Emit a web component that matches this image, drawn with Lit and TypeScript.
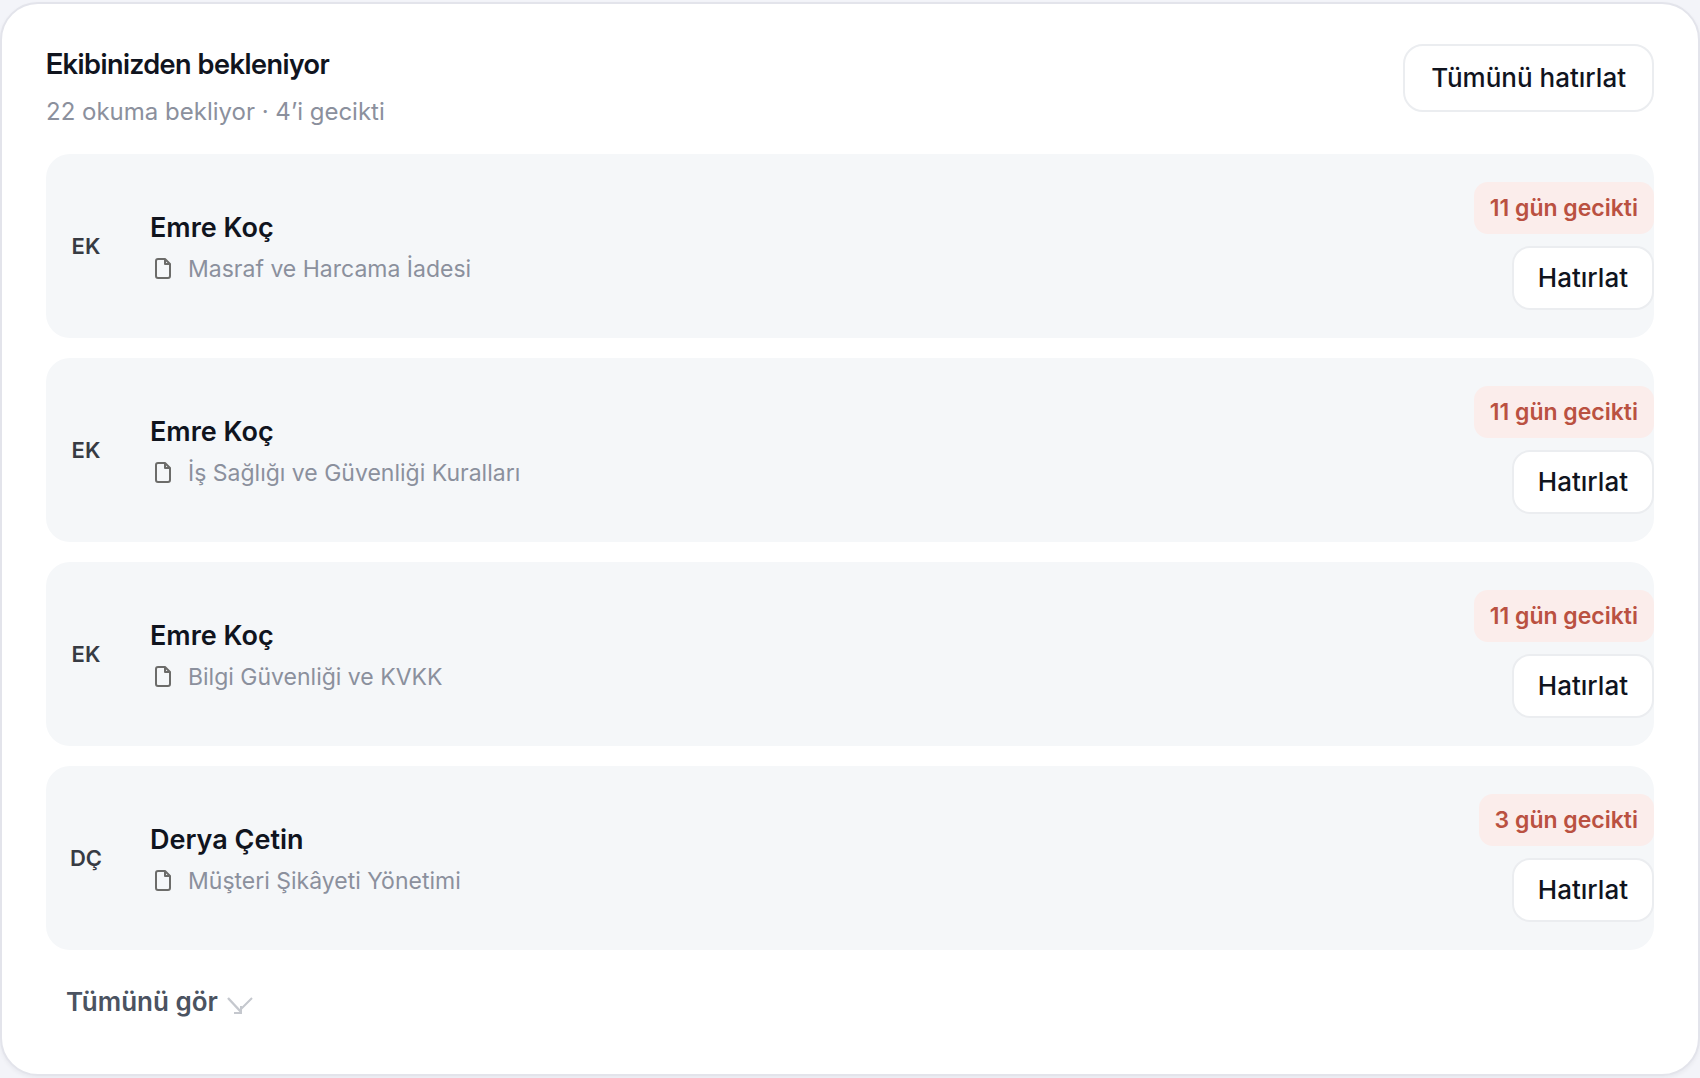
import { LitElement, html, css } from "lit";
import { customElement, property } from "lit/decorators.js";

interface Reading {
  initials: string;
  name: string;
  doc: string;
  daysLate: number;
}

const READINGS: Reading[] = [
  { initials: "EK", name: "Emre Koç", doc: "Masraf ve Harcama İadesi", daysLate: 11 },
  { initials: "EK", name: "Emre Koç", doc: "İş Sağlığı ve Güvenliği Kuralları", daysLate: 11 },
  { initials: "EK", name: "Emre Koç", doc: "Bilgi Güvenliği ve KVKK", daysLate: 11 },
  { initials: "DÇ", name: "Derya Çetin", doc: "Müşteri Şikâyeti Yönetimi", daysLate: 3 },
];

@customElement("reading-row")
export class ReadingRow extends LitElement {
  @property({ attribute: false }) reading!: Reading;

  static styles = css`
    :host {
      display: block;
    }
    .row {
      display: flex;
      align-items: center;
      gap: 24px;
      padding: 28px 0;
      border-radius: 24px;
      background: #f5f7f9;
    }
    .avatar {
      flex: none;
      width: 80px;
      text-align: center;
      font-size: 22px;
      line-height: 32px;
      font-weight: 600;
      color: #373b43;
    }
    .info {
      flex: 1;
      min-width: 0;
      padding-top: 6px;
    }
    .name {
      font-size: 27px;
      line-height: 40px;
      font-weight: 600;
      color: #10141e;
    }
    .doc {
      display: flex;
      align-items: center;
      gap: 12px;
      font-size: 23px;
      line-height: 42px;
      color: #8b909d;
    }
    .icon {
      flex: none;
      width: 26px;
      height: 26px;
    }
    .side {
      display: flex;
      flex-direction: column;
      align-items: flex-end;
      gap: 12px;
    }
    .badge {
      padding: 10px 16px;
      border-radius: 14px;
      background: #fbedeb;
      font-size: 23px;
      line-height: 32px;
      font-weight: 600;
      color: #ba5141;
      white-space: nowrap;
    }
    .remind {
      padding: 14px 24px;
      border: 2px solid #ebedf0;
      border-radius: 18px;
      background: #fff;
      font: inherit;
      font-size: 26px;
      line-height: 32px;
      font-weight: 500;
      color: #10141e;
      cursor: pointer;
    }
  `;

  render() {
    const r = this.reading;
    return html`
      <div class="row">
        <span class="avatar">${r.initials}</span>
        <div class="info">
          <div class="name">${r.name}</div>
          <div class="doc">
            <svg class="icon" viewBox="0 0 26 26" fill="none" stroke="#6c6c6a" stroke-width="2" stroke-linejoin="round" aria-hidden="true">
              <path d="M8 3H15L20 8V20Q20 22 18 22H8Q6 22 6 20V5Q6 3 8 3Z" />
              <path d="M15 3V8H20" />
            </svg>
            <span>${r.doc}</span>
          </div>
        </div>
        <div class="side">
          <span class="badge">${r.daysLate} gün gecikti</span>
          <button class="remind" type="button">Hatırlat</button>
        </div>
      </div>
    `;
  }
}

@customElement("app-root")
export class AppRoot extends LitElement {
  static styles = css`
    :host {
      display: block;
      box-sizing: border-box;
      min-height: 100vh;
      padding: 2px 0;
      background: #f3f4f9;
      font-family: Inter, "Liberation Sans", sans-serif;
    }
    .card {
      box-sizing: border-box;
      padding: 40px 44px;
      border: 2px solid #e3e4eb;
      border-radius: 38px;
      background: #fff;
      box-shadow: 0 2px 4px rgba(20, 24, 40, 0.05);
    }
    .head {
      display: flex;
      justify-content: space-between;
      align-items: flex-start;
      padding-bottom: 26px;
    }
    .title {
      margin: 0;
      padding-top: 4px;
      font-family: "Inter Display", Inter, "Liberation Sans", sans-serif;
      font-size: 28px;
      font-variation-settings: "opsz" 32;
      line-height: 32px;
      font-weight: 600;
      color: #10141e;
    }
    .summary {
      margin: 0;
      padding-top: 16px;
      font-size: 24px;
      line-height: 32px;
      color: #8b909d;
    }
    .all {
      padding: 16px 26px;
      border: 2px solid #ebedf0;
      border-radius: 20px;
      background: #fff;
      font: inherit;
      font-size: 26px;
      line-height: 32px;
      font-weight: 500;
      color: #10141e;
      cursor: pointer;
    }
    .list {
      display: flex;
      flex-direction: column;
      gap: 20px;
      margin: 0;
      padding: 0;
      list-style: none;
    }
    .more {
      display: flex;
      align-items: center;
      gap: 8px;
      margin-top: 20px;
      padding: 16px 20px;
      border: 0;
      background: none;
      font: inherit;
      font-size: 26px;
      line-height: 32px;
      font-weight: 600;
      color: #4b5361;
      cursor: pointer;
    }
    .arrow {
      width: 28px;
      height: 20px;
      padding-top: 8px;
    }
  `;

  render() {
    return html`
      <section class="card" aria-labelledby="title">
        <header class="head">
          <div>
            <h2 class="title" id="title">Ekibinizden bekleniyor</h2>
            <p class="summary">22 okuma bekliyor · 4’i gecikti</p>
          </div>
          <button class="all" type="button">Tümünü hatırlat</button>
        </header>
        <ul class="list">
          ${READINGS.map((r) => html`<li><reading-row .reading=${r}></reading-row></li>`)}
        </ul>
        <button class="more" type="button">
          Tümünü gör
          <svg class="arrow" viewBox="0 0 28 20" fill="none" stroke="#c5c8ce" aria-hidden="true">
            <path stroke-width="2.4" d="M2 2L15 16" />
            <path stroke-width="2" d="M26 2L15 13M8 17H16M15 10V17" />
          </svg>
        </button>
      </section>
    `;
  }
}
